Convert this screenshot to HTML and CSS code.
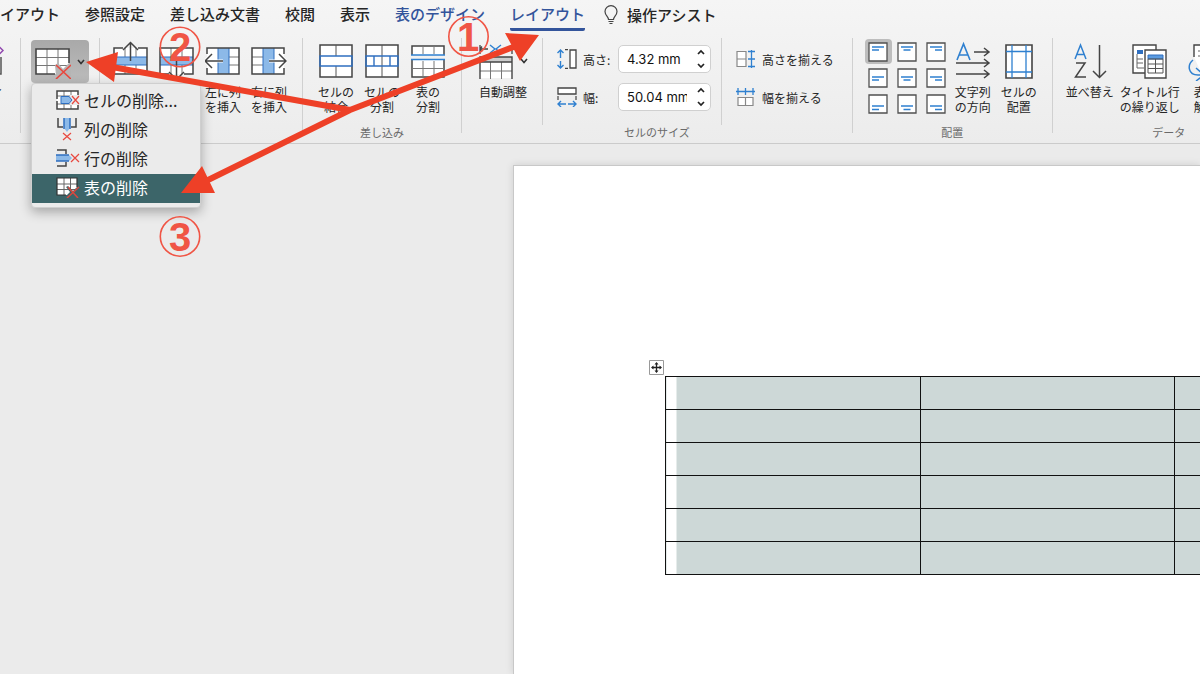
FILE: index.html
```html
<!DOCTYPE html>
<html lang="ja">

<head>
    <meta charset="UTF-8">
    <meta name="viewport" content="width=device-width, initial-scale=1.0">
    <title>レイアウト</title>
    <link rel="stylesheet" href="styles.css">
</head>

<body>
    <header class="ribbon">
        <nav class="tabs">
            <a href="#">レイアウト</a>
            <a href="#">参照設定</a>
            <a href="#">差し込み文書</a>
            <a href="#">校閲</a>
            <a href="#">表示</a>
            <a href="#" class="context">表のデザイン</a>
            <a href="#" class="context active">レイアウト</a>
            <a href="#" class="assist">
                <svg width="14" height="20" viewBox="0 0 14 20" fill="none" stroke="#444" stroke-width="1.2">
                    <path d="M4.5 14.5C4.5 11.5 1 10.500 1 6.500a6 5.800 0 0 1 12 0C13 10.500 9.500 11.500 9.500 14.500zM4.500 16.500h5M5.500 18.500h3" />
                </svg>
                操作アシスト
            </a>
        </nav>

        <div class="tools">
            <!-- Properties (scrolled off to the left) -->
            <section class="group first">
                <button class="tool">
                    <svg width="60" height="40" viewBox="0 0 60 40" fill="none" stroke="#555" stroke-width="1.5">
                        <path d="M57 16v17H27V8h20" />
                        <path d="M53 3.500l6 6-6 6-6-6z" stroke="#8e44ad" />
                    </svg>
                    プロパティ
                </button>
            </section>
            <span class="sep"></span>

            <!-- Delete -->
            <section class="group delete">
                <button class="delete-button" aria-label="削除">
                    <svg width="36" height="34" viewBox="0 0 36 34" fill="none">
                        <path d="M1 4h33v25H1z" fill="#fff" />
                        <path d="M12 4v25M23 4v25M1 12.500h33M1 20.500h33" stroke="#777" />
                        <path d="M20 20l3-2 5 6 6-6h2v13H21z" fill="#b5b5b5" />
                        <path d="M20 29H1V4h33v14" stroke="#444" stroke-width="1.6" />
                        <path d="M21 20l15 14M36 20L21 34" stroke="#e8483f" stroke-width="1.600" />
                    </svg>
                    <svg width="8" height="6" viewBox="0 0 8 6" fill="none" stroke="#333" stroke-width="1.600">
                        <path d="M1 1l3 3.500L7 1" />
                    </svg>
                </button>
                <div class="menu">
                    <button>
                        <svg width="24" height="20" viewBox="0 0 24 20" fill="none">
                            <path d="M1 1h21v18H1z" fill="#fff" />
                            <path d="M8 1v18M15 1v18M1 6h21M1 14h21" stroke="#777" />
                            <path d="M1 6V1h21v4M1 14v5h21v-4M1 6v3M1 11v3" stroke="#444" stroke-width="1.500" />
                            <path d="M14 5h9v10h-9z" fill="#ebebeb" />
                            <path d="M5 6.500h8l3 3.500-3 3.500H5z" fill="#8cb9e8" stroke="#2f6fc0" />
                            <path d="M16 6l7 8M23 6l-7 8" stroke="#e8483f" stroke-width="1.200" />
                        </svg>
                        セルの削除...
                    </button>
                    <button>
                        <svg width="24" height="24" viewBox="0 0 24 24" fill="none">
                            <path d="M2 1v9h5M20 1v9h-5" stroke="#444" stroke-width="1.500" />
                            <path d="M8 1v10l3 4 3-4V1z" fill="#8cb9e8" />
                            <path d="M8 1v11M14 1v11" stroke="#2f6fc0" stroke-width="1.500" />
                            <path d="M7 16l8 7M15 16l-8 7" stroke="#e8483f" stroke-width="1.200" />
                        </svg>
                        列の削除
                    </button>
                    <button>
                        <svg width="24" height="20" viewBox="0 0 24 20" fill="none">
                            <path d="M1 2h9v4M1 18h9v-4" stroke="#444" stroke-width="1.500" />
                            <path d="M0 7h13l3 3-3 3H0z" fill="#8cb9e8" />
                            <path d="M0 7h13M0 13h13" stroke="#2f6fc0" stroke-width="1.500" />
                            <path d="M15 6l8 8M23 6l-8 8" stroke="#e8483f" stroke-width="1.200" />
                        </svg>
                        行の削除
                    </button>
                    <button class="selected">
                        <svg width="24" height="22" viewBox="0 0 24 22" fill="none">
                            <path d="M1 2h20v17H1z" fill="#fff" />
                            <path d="M8 2v17M14.500 2v17M1 8h20M1 13.500h20" stroke="#666" />
                            <path d="M10 11l2-1 5 5 4-4h1v9H10l4-4z" fill="#3c6569" />
                            <path d="M10 19H1V2h20v9" stroke="#333" stroke-width="1.200" />
                            <path d="M12 11l10 11M23 11L11 22" stroke="#d9483f" stroke-width="1.500" />
                        </svg>
                        表の削除
                    </button>
                </div>
            </section>
            <span class="sep"></span>

            <!-- Insert rows and columns -->
            <section class="group insert">
                <div class="row">
                    <button class="tool" aria-label="上に行を挿入">
                        <svg width="36" height="40" viewBox="0 0 36 40" fill="none">
                            <path d="M1 7h33v26H1z" fill="#fff" />
                            <path d="M12 24v9M23 24v9M12 7v9M23 7v9" stroke="#777" />
                            <path d="M1 16h33v8H1z" fill="#8cb9e8" />
                            <path d="M1 16h33M1 24h33" stroke="#2f6fc0" />
                            <path d="M10 7H1v26h33V7h-9" stroke="#444" stroke-width="1.500" />
                            <path d="M17.500 20V2M10 9l7.500-7.500L25 9" stroke="#444" stroke-width="1.500" />
                        </svg>
                    </button>
                    <button class="tool" aria-label="下に行を挿入">
                        <svg width="36" height="40" viewBox="0 0 36 40" fill="none">
                            <path d="M1 7h33v26H1z" fill="#fff" />
                            <path d="M12 7v9M23 7v9M12 24v9M23 24v9" stroke="#777" />
                            <path d="M1 16h33v8H1z" fill="#8cb9e8" />
                            <path d="M1 16h33M1 24h33" stroke="#2f6fc0" />
                            <path d="M10 33H1V7h33v26h-9" stroke="#444" stroke-width="1.500" />
                            <path d="M17.500 20v18M10 31l7.500 7.500L25 31" stroke="#444" stroke-width="1.500" />
                        </svg>
                    </button>
                    <button class="tool">
                        <svg width="36" height="40" viewBox="0 0 36 40" fill="none">
                            <path d="M2 7h32v26H2z" fill="#fff" />
                            <path d="M24 16h10M24 24h10" stroke="#777" />
                            <path d="M13 7h11v26H13z" fill="#8cb9e8" />
                            <path d="M13 7v26M24 7v26" stroke="#2f6fc0" />
                            <path d="M2 13V7h32v26H2v-6" stroke="#444" stroke-width="1.500" />
                            <path d="M1 20h17M7 13l-7 7 7 7" stroke="#fff" stroke-width="3" />
                            <path d="M1 20h17M7 13l-7 7 7 7" stroke="#444" stroke-width="1.500" />
                        </svg>
                        左に列<br>を挿入
                    </button>
                    <button class="tool">
                        <svg width="36" height="40" viewBox="0 0 36 40" fill="none">
                            <path d="M1 7h32v26H1z" fill="#fff" />
                            <path d="M1 16h11M1 24h11" stroke="#777" />
                            <path d="M12 7h11v26H12z" fill="#8cb9e8" />
                            <path d="M12 7v26M23 7v26" stroke="#2f6fc0" />
                            <path d="M33 13V7H1v26h32v-6" stroke="#444" stroke-width="1.500" />
                            <path d="M18 20h17M28 13l7 7-7 7" stroke="#fff" stroke-width="3" />
                            <path d="M18 20h17M28 13l7 7-7 7" stroke="#444" stroke-width="1.500" />
                        </svg>
                        右に列<br>を挿入
                    </button>
                </div>
            </section>
            <span class="sep"></span>

            <!-- Merge -->
            <section class="group">
                <div class="row">
                    <button class="tool">
                        <svg width="34" height="40" viewBox="0 0 34 40" fill="none">
                            <path d="M1 4h32v32H1z" fill="#fff" stroke="#444" stroke-width="1.500" />
                            <path d="M17 4v11M17 25v11" stroke="#555" />
                            <path d="M1 15h32v10H1z" stroke="#2f6fc0" stroke-width="1.400" />
                        </svg>
                        セルの<br>結合
                    </button>
                    <button class="tool">
                        <svg width="34" height="40" viewBox="0 0 34 40" fill="none">
                            <path d="M1 4h32v32H1z" fill="#fff" stroke="#444" stroke-width="1.500" />
                            <path d="M17 4v32" stroke="#555" />
                            <path d="M1 15h32v10H1zM9 15v10M25 15v10" stroke="#2f6fc0" stroke-width="1.400" />
                        </svg>
                        セルの<br>分割
                    </button>
                    <button class="tool">
                        <svg width="34" height="40" viewBox="0 0 34 40" fill="none">
                            <path d="M1 14V5h32v9M1 19v17h32V19" fill="#fff" stroke="#444" stroke-width="1.500" />
                            <path d="M12 5v8M23 5v8M12 20v16M23 20v16M1 27.500h32" stroke="#777" />
                            <path d="M0 14h34M0 18.500h34" stroke="#2f80d0" stroke-width="1.400" />
                        </svg>
                        表の<br>分割
                    </button>
                </div>
                <h2>差し込み</h2>
            </section>
            <span class="sep"></span>

            <!-- Cell size -->
            <section class="group">
                <div class="row">
                    <button class="tool autofit">
                        <span class="with-arrow">
                            <svg width="36" height="40" viewBox="0 0 36 40" fill="none">
                                <path d="M2 4v9M34 4v9M2 8h8M4 5.500L2 8l2 2.500M26 8h8" stroke="#444" stroke-width="1.300" />
                                <path d="M12 4l5 4-5 4M23 4l-5 4 5 4" stroke="#2f80d0" stroke-width="1.400" />
                                <path d="M2 17h32v20H2z" fill="#fff" />
                                <path d="M2 16h32v5H2z" fill="#ccc" />
                                <path d="M12.500 21v17M23.500 21v17M2 30h32" stroke="#777" />
                                <path d="M2 38V16h32v22M2 21h32" stroke="#444" stroke-width="1.400" />
                            </svg>
                            <svg width="8" height="6" viewBox="0 0 8 6" fill="none" stroke="#333" stroke-width="1.600">
                                <path d="M1 1l3 3.500L7 1" />
                            </svg>
                        </span>
                        自動調整
                    </button>
                    <span class="sep short"></span>
                    <div class="fields">
                        <div class="field">
                            <svg width="20" height="20" viewBox="0 0 20 20" fill="none">
                                <path d="M3.500 9V1M.5 4l3-3 3 3M3.500 12v7M.5 16l3 3 3-3" stroke="#2f80d0" stroke-width="1.400" />
                                <path d="M8 .7h3M8 19.300h3" stroke="#444" stroke-width="1.200" />
                                <path d="M13 1h6v18h-6z" fill="#fff" stroke="#444" stroke-width="1.300" />
                            </svg>
                            <label for="height">高さ:</label>
                            <div class="spin">
                                <input id="height" type="text" value="4.32 mm">
                                <button aria-label="高さを変更">
                                    <svg width="8" height="20" viewBox="0 0 8 20" fill="none" stroke="#222" stroke-width="1.700">
                                        <path d="M1 5l3-3 3 3M1 15l3 3 3-3" />
                                    </svg>
                                </button>
                            </div>
                        </div>
                        <div class="field">
                            <svg width="20" height="20" viewBox="0 0 20 20" fill="none">
                                <path d="M1 1h18v6H1z" fill="#fff" stroke="#444" stroke-width="1.300" />
                                <path d="M1 9v4M19 9v4" stroke="#444" stroke-width="1.200" />
                                <path d="M9 17H1M4 14l-3 3 3 3M11 17h8M16 14l3 3-3 3" stroke="#2f80d0" stroke-width="1.400" />
                            </svg>
                            <label for="width">幅:</label>
                            <div class="spin">
                                <input id="width" type="text" value="50.04 mm">
                                <button aria-label="幅を変更">
                                    <svg width="8" height="20" viewBox="0 0 8 20" fill="none" stroke="#222" stroke-width="1.700">
                                        <path d="M1 5l3-3 3 3M1 15l3 3 3-3" />
                                    </svg>
                                </button>
                            </div>
                        </div>
                    </div>
                    <span class="sep short"></span>
                    <div class="fields equal">
                        <button>
                            <svg width="19" height="20" viewBox="0 0 19 20" fill="none">
                                <path d="M1 2.500h9v15H1zM1 10h9" fill="#fff" stroke="#888" stroke-width="1.200" />
                                <path d="M15.500 1v18M12 2.500h7M12 10h7M12 17.500h7" stroke="#2f80d0" stroke-width="1.300" />
                            </svg>
                            高さを揃える
                        </button>
                        <button>
                            <svg width="19" height="20" viewBox="0 0 19 20" fill="none">
                                <path d="M2 10.500h15v8H2zM9.500 10.500v8" fill="#fff" stroke="#888" stroke-width="1.200" />
                                <path d="M0 4.500h19M2 1v7M9.500 1v7M17 1v7" stroke="#2f80d0" stroke-width="1.300" />
                            </svg>
                            幅を揃える
                        </button>
                    </div>
                </div>
                <h2>セルのサイズ</h2>
            </section>
            <span class="sep"></span>

            <!-- Alignment -->
            <section class="group">
                <div class="row">
                    <div class="align">
                        <button class="on" aria-label="上揃え (左)"><svg viewBox="0 0 20 20"><path class="box" d="M1 1h18v18H1z" /><path d="M4 5h12M4 8h7" /></svg></button>
                        <button aria-label="上揃え (中央)"><svg viewBox="0 0 20 20"><path class="box" d="M1 1h18v18H1z" /><path d="M4 5h12M6.500 8h7" /></svg></button>
                        <button aria-label="上揃え (右)"><svg viewBox="0 0 20 20"><path class="box" d="M1 1h18v18H1z" /><path d="M4 5h12M9 8h7" /></svg></button>
                        <button aria-label="中央揃え (左)"><svg viewBox="0 0 20 20"><path class="box" d="M1 1h18v18H1z" /><path d="M4 9h12M4 12h7" /></svg></button>
                        <button aria-label="中央揃え"><svg viewBox="0 0 20 20"><path class="box" d="M1 1h18v18H1z" /><path d="M4 9h12M6.500 12h7" /></svg></button>
                        <button aria-label="中央揃え (右)"><svg viewBox="0 0 20 20"><path class="box" d="M1 1h18v18H1z" /><path d="M4 9h12M9 12h7" /></svg></button>
                        <button aria-label="下揃え (左)"><svg viewBox="0 0 20 20"><path class="box" d="M1 1h18v18H1z" /><path d="M4 12h12M4 15.500h7" /></svg></button>
                        <button aria-label="下揃え (中央)"><svg viewBox="0 0 20 20"><path class="box" d="M1 1h18v18H1z" /><path d="M4 12h12M6.500 15.500h7" /></svg></button>
                        <button aria-label="下揃え (右)"><svg viewBox="0 0 20 20"><path class="box" d="M1 1h18v18H1z" /><path d="M4 12h12M9 15.500h7" /></svg></button>
                    </div>
                    <button class="tool">
                        <svg width="36" height="40" viewBox="0 0 36 40" fill="none">
                            <path d="M2 19L8.500 3 15 19M4 14h9" stroke="#2f80d0" stroke-width="1.600" />
                            <path d="M19 11h15M29 7l5 4-5 4M1 22h33M29 18l5 4-5 4M1 33h33M29 29l5 4-5 4" stroke="#444" stroke-width="1.500" />
                        </svg>
                        文字列<br>の方向
                    </button>
                    <button class="tool">
                        <svg width="30" height="40" viewBox="0 0 30 40" fill="none">
                            <path d="M2 4h26v33H2z" fill="#fff" stroke="#444" stroke-width="1.600" />
                            <path d="M8 4v33M22 4v33M2 10.500h26M2 31h26" stroke="#2f80d0" stroke-width="1.300" />
                        </svg>
                        セルの<br>配置
                    </button>
                </div>
                <h2>配置</h2>
            </section>
            <span class="sep"></span>

            <!-- Data -->
            <section class="group data">
                <div class="row">
                    <button class="tool">
                        <svg width="34" height="40" viewBox="0 0 34 40" fill="none">
                            <path d="M2 18L7.500 4 13 18M4 13.500h7" stroke="#2f80d0" stroke-width="1.500" />
                            <path d="M3 22h9L2.500 36H13M26.500 4v32M20 30l6.500 6.500L33 30" stroke="#444" stroke-width="1.500" />
                        </svg>
                        並べ替え
                    </button>
                    <button class="tool">
                        <svg width="36" height="40" viewBox="0 0 36 40" fill="none">
                            <path d="M1 4h23v28H1z" fill="#fff" stroke="#444" stroke-width="1.400" />
                            <path d="M5 9h6v4H5z" fill="#2f6fc0" />
                            <path d="M5 13v14h7M5 18h6M5 22h6" stroke="#666" />
                            <path d="M13 9h21v28H13z" fill="#fff" stroke="#444" stroke-width="1.400" />
                            <path d="M16 14h15v4H16z" fill="#5b9be0" stroke="#2f6fc0" />
                            <path d="M16 18h15v14H16zM23.500 18v14M16 23h15M16 27.500h15" stroke="#555" />
                        </svg>
                        タイトル行<br>の繰り返し
                    </button>
                    <button class="tool">
                        <svg width="38" height="40" viewBox="0 0 38 40" fill="none">
                            <path d="M7 16V4h20l6 6v26H16" fill="#fff" stroke="#444" stroke-width="1.400" />
                            <path d="M11 10h10M11 15h16M13 20h14" stroke="#666" />
                            <path d="M6 19c-6 5-5 15 5 15h7M9 27l8 7-8 6" stroke="#2f80d0" stroke-width="1.500" />
                        </svg>
                        表の<br>解除
                    </button>
                </div>
                <h2>データ</h2>
            </section>
        </div>
    </header>

    <main class="workspace">
        <div class="page">
            <svg class="handle" width="15" height="15" viewBox="0 0 15 15" fill="none">
                <path d="M.5.5h14v14H.5z" fill="#fff" stroke="#999" />
                <path d="M7.500 3v9M3 7.500h9" stroke="#222" stroke-width="1.300" />
                <path d="M7.500 2l2 2.500h-4zM7.500 13l2-2.500h-4zM2 7.500l2.500-2v4zM13 7.500l-2.500-2v4z" fill="#222" />
            </svg>
            <table>
                <tr><td></td><td></td><td></td></tr>
                <tr><td></td><td></td><td></td></tr>
                <tr><td></td><td></td><td></td></tr>
                <tr><td></td><td></td><td></td></tr>
                <tr><td></td><td></td><td></td></tr>
                <tr><td></td><td></td><td></td></tr>
            </table>
        </div>
    </main>

    <!-- Step numbers and arrows -->
    <svg class="steps" width="600" height="270" viewBox="0 0 600 270">
        <g class="circles">
            <circle cx="468.500" cy="36.500" r="19.700" />
            <circle cx="180" cy="47" r="19.700" />
            <circle cx="180" cy="236.500" r="19.700" />
        </g>
        <g class="numbers">
            <text x="468" y="51">1</text>
            <text x="180" y="61">2</text>
            <text x="180" y="251">3</text>
        </g>
        <g class="arrows">
            <path d="M112 67L350 110M204 182L350 110L516 46" />
            <path class="head" d="M86 62l32-10-4 30zM539 35l-34-2 15 28zM181 193l21-27 13 27z" />
        </g>
    </svg>
</body>

</html>
```
FILE: styles.css
```css
* {
    box-sizing: border-box;
}

body {
    margin: 0;
    min-height: 100vh;
    display: flex;
    flex-direction: column;
    position: relative;
    overflow: hidden;
    background: #ebebeb;
    color: #262626;
    font-family: "Noto Sans CJK JP", sans-serif;
    font-size: 12px;
}

button,
input {
    font: inherit;
    color: inherit;
    border: none;
    background: none;
    padding: 0;
    margin: 0;
}

svg {
    flex: none;
}

/* Ribbon */
.ribbon {
    background: linear-gradient(#f5f5f5, #ececec);
    border-bottom: 1px solid #cbcbcb;
}

/* Tabs */
.tabs {
    display: flex;
    gap: 25px;
    height: 38px;
    margin-left: -15px;
    font-size: 15px;
    font-weight: 500;
    line-height: 28px;
    white-space: nowrap;
}

.tabs a {
    height: 31px;
    color: #262626;
    text-decoration: none;
}

.tabs .context {
    color: #33549b;
}

.tabs .active {
    border-bottom: 3px solid #33549b;
    border-radius: 2px;
}

.tabs .assist {
    display: flex;
    align-items: center;
    gap: 9px;
    height: 29px;
    margin-left: -6px;
}

/* Tool groups */
.tools {
    display: flex;
    align-items: flex-start;
    height: 105px;
}

.sep {
    flex: none;
    width: 1px;
    height: 95px;
    background: #d0d0d0;
}

.sep.short {
    height: 87px;
}

.group {
    flex: none;
    padding: 0 10px;
}

.group.first {
    margin-left: -56px;
    padding: 0 16px 0 0;
}

.group.delete {
    position: relative;
    padding: 2px 10px;
}

.group.insert {
    padding-left: 8px;
}

.row {
    display: flex;
    height: 87px;
}

.group h2 {
    margin: 0;
    color: #6a6a6a;
    font-size: 11px;
    font-weight: 400;
    line-height: 14px;
    text-align: center;
}

.group.data h2 {
    padding-left: 46px;
}

.tool {
    display: flex;
    flex-direction: column;
    align-items: center;
    flex: none;
    min-width: 46px;
    padding-top: 3px;
    line-height: 15px;
    white-space: nowrap;
}

.tool svg {
    margin-bottom: 3px;
}

.tool.autofit {
    padding: 3px 14px 0 6px;
}

.data .tool {
    padding: 3px 3px 0;
}

.with-arrow {
    display: flex;
    align-items: center;
    gap: 6px;
}

/* Delete button and its menu */
.delete-button {
    display: flex;
    align-items: center;
    justify-content: center;
    gap: 6px;
    width: 58px;
    height: 43px;
    border-radius: 4px;
    background: linear-gradient(#a9a9a9, #bcbcbc);
}

.menu {
    position: absolute;
    top: 45px;
    left: 10px;
    width: 170px;
    padding: 3px 0 4px;
    border: 1px solid #cfcfcf;
    border-radius: 4px;
    background: #ebebeb;
    box-shadow: 0 4px 12px rgba(0, 0, 0, 0.3);
    z-index: 1;
}

.menu button {
    display: flex;
    align-items: center;
    gap: 4px;
    width: 100%;
    height: 29px;
    padding: 0 0 3px 24px;
    font-size: 16px;
    white-space: nowrap;
}

.menu .selected {
    background: #3c6569;
    color: white;
}

/* Size fields */
.fields {
    display: flex;
    flex-direction: column;
    gap: 10px;
    padding: 7px 10px 0 14px;
}

.field {
    display: flex;
    align-items: center;
    height: 28px;
}

.field label {
    width: 41px;
    padding-left: 6px;
    white-space: nowrap;
}

.spin {
    display: flex;
    align-items: center;
    width: 93px;
    height: 28px;
    padding: 0 5px 0 8px;
    border: 1px solid #d0d0d0;
    border-radius: 5px;
    background: white;
}

.spin input {
    flex: 1;
    min-width: 0;
    color: #111;
    font-family: Inter, sans-serif;
    font-size: 13px;
}

.spin button {
    display: flex;
    padding-left: 10px;
}

.fields.equal {
    padding-right: 8px;
}

.equal button {
    display: flex;
    align-items: center;
    gap: 7px;
    height: 28px;
    white-space: nowrap;
}

/* Alignment buttons */
.align {
    display: grid;
    grid-template-columns: repeat(3, 27px);
    grid-auto-rows: 25px;
    gap: 1px 2px;
    padding: 1px 0 0 2px;
}

.align button {
    display: flex;
    align-items: center;
    justify-content: center;
    border-radius: 4px;
}

.align .on {
    background: #bdbdbd;
}

.align svg {
    width: 20px;
    fill: none;
    stroke: #2f80d0;
    stroke-width: 1.3;
}

.align .box {
    fill: white;
    stroke: #505050;
}

/* Document */
.workspace {
    flex: 1;
    display: flex;
    padding: 21px 0 0 513px;
}

.page {
    flex: 1;
    min-width: 0;
    padding: 194px 0 0 151px;
    border: solid #c8c8c8;
    border-width: 1px 0 0 1px;
    background: white;
    box-shadow: 0 0 8px rgba(0, 0, 0, 0.12);
}

.handle {
    display: block;
    margin: 0 0 1px -16px;
}

table {
    width: 765px;
    table-layout: fixed;
    border-collapse: collapse;
}

td {
    height: 33px;
    border: 1px solid #111;
    background: #cdd8d7;
}

td:first-child {
    background: linear-gradient(to right, white 10px, #cdd8d7 10px);
}

/* Step overlay */
.steps {
    position: absolute;
    top: 0;
    left: 0;
    z-index: 2;
    pointer-events: none;
}

.circles {
    fill: none;
    stroke: #f05545;
    stroke-width: 1.6;
}

.numbers {
    fill: #f05545;
    font-family: "Liberation Sans", sans-serif;
    font-size: 40px;
    font-weight: bold;
    text-anchor: middle;
}

.arrows {
    fill: none;
    stroke: #ee4027;
    stroke-width: 6;
}

.arrows .head {
    fill: #ee4027;
    stroke: none;
}
```
